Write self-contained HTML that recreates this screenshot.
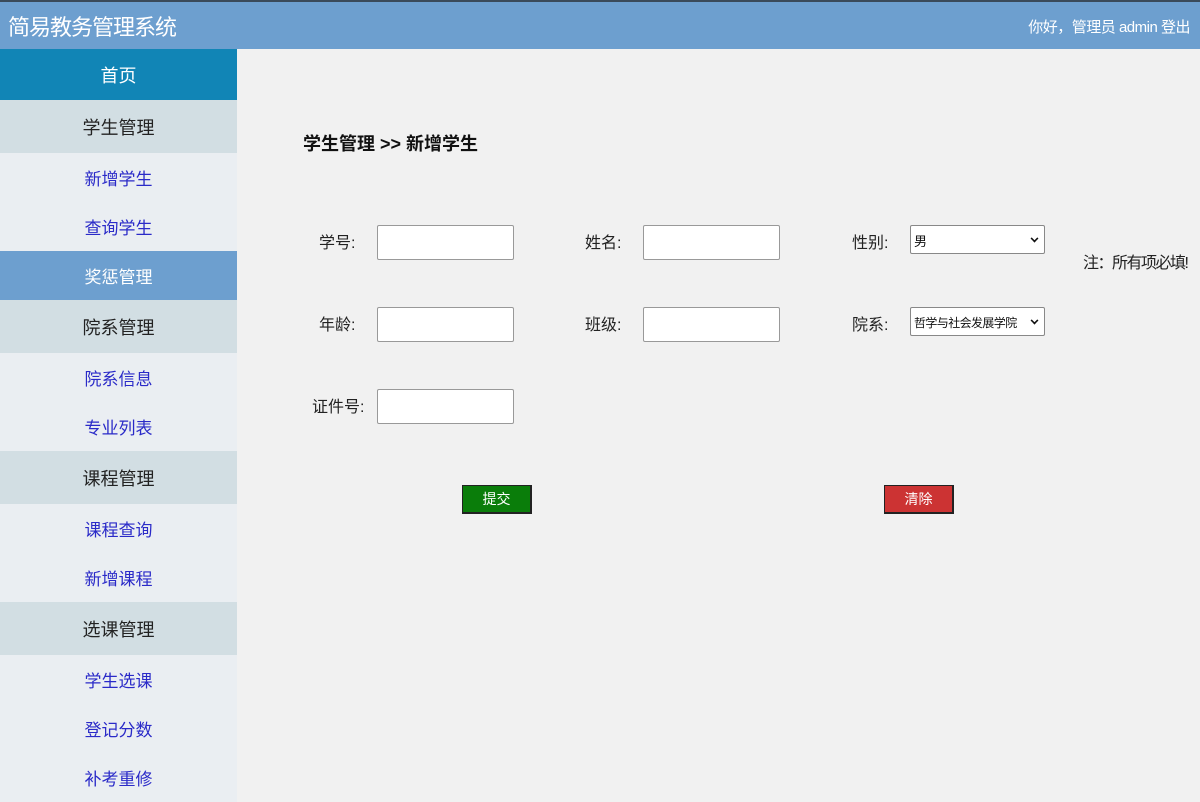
<!DOCTYPE html>
<html><head><meta charset="utf-8"><style>
*{margin:0;padding:0;box-sizing:border-box}
body{width:1200px;height:800px;overflow:hidden;background:#f1f1f1;font-family:"Liberation Sans","Noto Sans CJK SC",sans-serif;position:relative}
.hd{position:absolute;left:0;top:0;width:1200px;height:49px;background:#6d9fcf;border-top:2px solid #3a4a5a}
.hd .t{position:absolute;left:8px;top:8px;color:#fff;font-size:22px;letter-spacing:-1px}
.hd .r{position:absolute;right:10px;top:14px;color:#fff;font-size:15px;letter-spacing:-0.5px}
.sb{position:absolute;left:0;top:49px;width:237px}
.sb div{text-align:center;font-size:18px;display:flex;align-items:center;justify-content:center}
.home{background:#1185b6;color:#fff;height:51px}
.g{background:#d2dee3;color:#222;height:53px}
.l{background:#eaeef2;color:#2a2ac8;height:49px;font-size:17px!important}
.b{background:#6d9fcf;color:#fff;height:49px;font-size:17px!important}
.a{position:absolute;font-size:16px;color:#222;white-space:nowrap}
.in{position:absolute;width:137px;height:35px;background:#fff;border:1px solid #999;border-radius:2px}
.sel{position:absolute;width:135px;height:29px;background:#fff;border:1px solid #888;border-radius:2px;font-size:13px;padding:5px 3px;color:#111;white-space:nowrap;overflow:hidden}
.sel span{position:absolute;right:6px;top:9px;width:7px;height:7px;border-right:2px solid #111;border-bottom:2px solid #111;transform:rotate(45deg) scale(0.8)}
.btn{position:absolute;width:70px;height:29px;color:#fff;font-size:14px;text-align:center;line-height:27px;border:1px solid #222;border-right-width:2px;border-bottom-width:2px}
</style></head><body>
<div class="hd"><div class="t">简易教务管理系统</div><div class="r">你好，管理员 admin 登出</div></div>
<div class="sb">
<div class="home">首页</div>
<div class="g">学生管理</div>
<div class="l">新增学生</div>
<div class="l">查询学生</div>
<div class="b">奖惩管理</div>
<div class="g">院系管理</div>
<div class="l">院系信息</div>
<div class="l">专业列表</div>
<div class="g">课程管理</div>
<div class="l">课程查询</div>
<div class="l">新增课程</div>
<div class="g">选课管理</div>
<div class="l">学生选课</div>
<div class="l">登记分数</div>
<div class="l">补考重修</div>
</div>
<div class="a" style="left:303px;top:130px;font-size:18px;font-weight:bold;color:#111">学生管理 &gt;&gt; 新增学生</div>
<div class="a" style="left:319px;top:229px">学号:</div>
<div class="in" style="left:377px;top:225px"></div>
<div class="a" style="left:585px;top:229px">姓名:</div>
<div class="in" style="left:643px;top:225px"></div>
<div class="a" style="left:852px;top:229px">性别:</div>
<div class="sel" style="left:910px;top:225px">男<span></span></div>
<div class="a" style="left:1083px;top:249px;letter-spacing:-1.5px">注：所有项必填!</div>
<div class="a" style="left:319px;top:311px">年龄:</div>
<div class="in" style="left:377px;top:307px"></div>
<div class="a" style="left:585px;top:311px">班级:</div>
<div class="in" style="left:643px;top:307px"></div>
<div class="a" style="left:852px;top:311px">院系:</div>
<div class="sel" style="left:910px;top:307px;font-size:12px;padding-top:6px;letter-spacing:-0.6px">哲学与社会发展学院<span></span></div>
<div class="a" style="left:312px;top:393px">证件号:</div>
<div class="in" style="left:377px;top:389px"></div>
<div class="btn" style="left:462px;top:485px;background:#0a7d0a">提交</div>
<div class="btn" style="left:884px;top:485px;background:#cc3333">清除</div>
</body></html>
